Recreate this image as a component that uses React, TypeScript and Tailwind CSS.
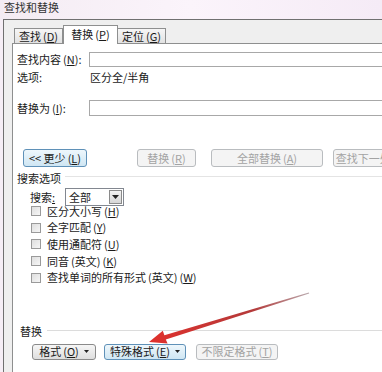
import React from "react";

const font = { fontFamily: '"Noto Sans CJK SC", "Noto Sans", sans-serif' };

function Key({ k }: { k: string }) {
  return (
    <span className="ml-[2px]">
      (<span className="underline">{k}</span>)
    </span>
  );
}

function Btn({
  w,
  children,
  blue,
  disabled,
  h = "h-[18px]",
}: {
  w: string;
  children: React.ReactNode;
  blue?: boolean;
  disabled?: boolean;
  h?: string;
}) {
  const tone = disabled
    ? "border-[#b9bcbf] bg-[#f4f4f4] text-[#a3a3a3]"
    : blue
    ? "border-[#5f91b8] bg-gradient-to-b from-[#eef7fc] to-[#cfe6f3] text-[#1a1a1a]"
    : "border-[#8a8a8a] bg-gradient-to-b from-[#f6f6f6] to-[#dedede] text-[#1a1a1a]";
  return (
    <div
      className={`${w} ${h} ${tone} shrink-0 border rounded-[3px] flex items-center justify-center text-[11px] leading-none whitespace-nowrap overflow-hidden`}
    >
      {children}
    </div>
  );
}

function Check({ children }: { children: React.ReactNode }) {
  return (
    <div className="h-[16.6px] flex items-center gap-[6px]">
      <div className="w-[10px] h-[10px] border border-[#9a9a9a] bg-gradient-to-br from-[#dedede] to-[#f6f6f6]" />
      <span className="text-[11px] leading-none text-[#1a1a1a] whitespace-nowrap">{children}</span>
    </div>
  );
}

export default function App() {
  return (
    <div className="w-[382px] h-[372px] overflow-hidden relative bg-[#f6eef6]" style={font}>
      {/* title bar */}
      <div className="h-[19px] pl-[4px] pt-[1px] bg-gradient-to-r from-[#f4ecf3] via-[#fbf4fb] to-[#f5ebf6] text-[11px] leading-[12px] text-[#333]">
        查找和替换
      </div>

      {/* window frame */}
      <div className="ml-[3px] border-t border-l border-[#707070] bg-[#efefef] h-[353px]">
        {/* tab strip */}
        <div className="h-[23px] pl-[10px] flex items-end text-[11px] leading-none text-[#1a1a1a]">
          <div className="w-[49px] h-[15px] border border-b-0 border-[#8e8f8f] bg-gradient-to-b from-[#f6f6f6] to-[#e2e2e2] flex items-center justify-center whitespace-nowrap">
            查找<Key k="D" />
          </div>
          <div className="relative z-10 w-[55px] h-[19px] -mb-px border border-b-0 border-[#8e8f8f] bg-white flex items-start pt-[3px] justify-center whitespace-nowrap">
            替换<Key k="P" />
          </div>
          <div className="w-[48px] h-[15px] border border-b-0 border-l-0 border-[#8e8f8f] bg-gradient-to-b from-[#f6f6f6] to-[#e2e2e2] flex items-center justify-center whitespace-nowrap">
            定位<Key k="G" />
          </div>
        </div>

        {/* panel */}
        <div className="ml-[8px] border-t border-l border-[#8e8f8f] bg-white h-[330px] pl-[4px] text-[11px] leading-none text-[#1a1a1a]">
          <div className="mt-[8px] h-[15px] flex items-center">
            <span className="w-[72px] whitespace-nowrap">
              查找内容<Key k="N" />:
            </span>
            <div className="flex-1 h-[15px] border border-r-0 border-[#a8a8a8]" />
          </div>
          <div className="mt-[3px] h-[15px] flex items-center">
            <span className="w-[73px]">选项:</span>
            <span>区分全/半角</span>
          </div>
          <div className="mt-[15px] h-[16px] flex items-center">
            <span className="w-[72px] whitespace-nowrap">
              替换为<Key k="I" />:
            </span>
            <div className="flex-1 h-[16px] border border-r-0 border-[#a8a8a8]" />
          </div>

          {/* action buttons */}
          <div className="mt-[33px] pl-[6px] flex">
            <Btn w="w-[64px]" blue>
              &lt;&lt; 更少<Key k="L" />
            </Btn>
            <div className="ml-[50px]">
              <Btn w="w-[59px]" disabled>
                替换<Key k="R" />
              </Btn>
            </div>
            <div className="ml-[15px]">
              <Btn w="w-[112px]" disabled>
                全部替换<Key k="A" />
              </Btn>
            </div>
            <div className="ml-[10px]">
              <Btn w="w-[76px]" disabled>
                查找下一处<Key k="F" />
              </Btn>
            </div>
          </div>

          {/* search options */}
          <div className="mt-[4px] h-[14px] flex items-center gap-[4px]">
            <span className="whitespace-nowrap">搜索选项</span>
            <div className="flex-1 border-t border-[#e4e4e4] -mt-[4px]" />
          </div>
          <div className="mt-[3px] pl-[13px] h-[18px] flex items-center">
            <span className="w-[35px] whitespace-nowrap">
              搜索<span className="underline">:</span>
            </span>
            <div className="w-[59px] h-[18px] border border-[#828790] flex items-center justify-between pl-[3px] pr-[1px]">
              <span>全部</span>
              <div className="w-[13px] h-[14px] border border-[#8a8a8a] bg-gradient-to-b from-[#f2f2f2] to-[#d6d6d6] flex items-center justify-center">
                <svg width="7" height="4" viewBox="0 0 7 4">
                  <path d="M0 0h7L3.5 4z" fill="#222" />
                </svg>
              </div>
            </div>
          </div>
          <div className="-mt-[3px] pl-[14px] flex flex-col">
            <Check>
              区分大小写<Key k="H" />
            </Check>
            <Check>
              全字匹配<Key k="Y" />
            </Check>
            <Check>
              使用通配符<Key k="U" />
            </Check>
            <Check>
              同音<span className="ml-[2px]">(英文)</span>
              <Key k="K" />
            </Check>
            <Check>
              查找单词的所有形式<span className="ml-[2px]">(英文)</span>
              <Key k="W" />
            </Check>
          </div>

          {/* replace group */}
          <div className="mt-[39px] pl-[3px] h-[14px] flex items-center gap-[5px]">
            <span className="whitespace-nowrap">替换</span>
            <div className="flex-1 border-t border-[#dcdcdc] -mt-[2px]" />
          </div>
          <div className="mt-[5px] pl-[15px] flex">
            <Btn w="w-[64px]" h="h-[16px]">
              格式<Key k="O" />
              <svg className="ml-[5px]" width="5" height="3" viewBox="0 0 5 3">
                <path d="M0 0h5L2.5 3z" fill="#222" />
              </svg>
            </Btn>
            <div className="ml-[8px]">
              <Btn w="w-[82px]" h="h-[16px]" blue>
                特殊格式<Key k="E" />
                <svg className="ml-[5px]" width="5" height="3" viewBox="0 0 5 3">
                  <path d="M0 0h5L2.5 3z" fill="#222" />
                </svg>
              </Btn>
            </div>
            <div className="ml-[10px]">
              <Btn w="w-[82px]" h="h-[16px]" disabled>
                不限定格式<Key k="T" />
              </Btn>
            </div>
          </div>
        </div>
      </div>

      {/* red annotation arrow */}
      <svg className="absolute left-0 top-0 pointer-events-none" width="382" height="372" viewBox="0 0 382 372">
        <defs>
          <linearGradient id="arr" x1="309" y1="293" x2="150" y2="342" gradientUnits="userSpaceOnUse">
            <stop offset="0" stopColor="#b9a9ad" />
            <stop offset="0.35" stopColor="#b43a3a" />
            <stop offset="1" stopColor="#e0302c" />
          </linearGradient>
        </defs>
        <polygon
          points="309.2,293.6 308.8,292.4 164.4,335.2 162.8,330.8 149,342 167.6,343.6 165.8,339.6"
          fill="url(#arr)"
        />
      </svg>
    </div>
  );
}
